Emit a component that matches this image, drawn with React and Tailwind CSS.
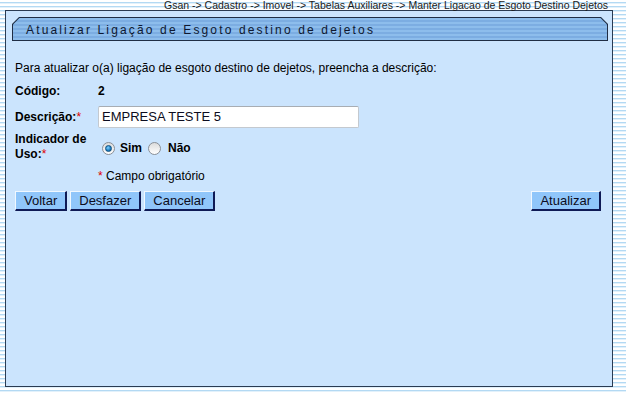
import React from "react";

function Radio({ checked }) {
  return (
    <span className="relative inline-flex h-[13px] w-[13px] items-center justify-center rounded-full border border-[#8a8f96] bg-[linear-gradient(to_bottom,#dcdcdc,#ffffff)]">
      {checked && (
        <span className="h-[7px] w-[7px] rounded-full border border-[#0d4f80] bg-[radial-gradient(circle_at_40%_35%,#7fd0ff,#1a7cc0_60%,#0b4d85)]" />
      )}
    </span>
  );
}

function Btn({ children }) {
  return (
    <button className="h-[20px] border-t border-l border-r-2 border-b-2 border-t-[#f0f8ff] border-l-[#f0f8ff] border-r-[#0f1a55] border-b-[#0f1a55] bg-[#90c6fa] px-[8px] text-[13px] leading-none text-[#0c0c20]">
      {children}
    </button>
  );
}

export default function App() {
  return (
    <div
      className="h-[393px] w-[626px] overflow-hidden bg-[repeating-linear-gradient(to_bottom,#ffffff_0px,#ffffff_2px,#b3d9f3_2px,#b3d9f3_3px,#e2f1fb_3px,#e2f1fb_4px)] text-[#000]"
      style={{ fontFamily: '"Liberation Sans", Arial, sans-serif' }}
    >
      <div className="relative z-10 flex h-[10px] justify-end pr-[18px]">
        <span className="relative top-[-1px] whitespace-nowrap text-[10.5px] leading-[12px] text-[#1a1a1a]">
          Gsan -&gt; Cadastro -&gt; Imovel -&gt; Tabelas Auxiliares -&gt; Manter Ligacao de Esgoto Destino Dejetos
        </span>
      </div>
      <div className="ml-[5px] h-[377px] w-[608px] border border-[#2a3b52] bg-[#cbe4fd]">
        <div className="ml-[6px] mt-[6px] h-[24px] w-[596px] bg-[#1f2d44] p-[1px] [clip-path:polygon(7px_0,calc(100%-7px)_0,100%_7px,100%_100%,0_100%,0_7px)]">
          <div className="flex h-full w-full items-center bg-[repeating-linear-gradient(to_bottom,#8dbdec_0px,#8dbdec_2px,#7cade2_2px,#7cade2_4px)] pl-[13px] pt-[1px] [clip-path:polygon(6.5px_0,calc(100%-6.5px)_0,100%_6.5px,100%_100%,0_100%,0_6.5px)]">
            <span className="text-[12px] leading-none tracking-[2.15px] text-[#0e1830]">
              Atualizar Ligação de Esgoto destino de dejetos
            </span>
          </div>
        </div>
        <div className="pl-[9px] pr-[11px]">
          <div className="mt-[20px] text-[12px] leading-[14px]">
            Para atualizar o(a) ligação de esgoto destino de dejetos, preencha a descrição:
          </div>
          <div className="mt-[9px] flex h-[14px] items-center text-[12px] font-bold leading-[14px]">
            <span className="w-[83px]">Código:</span>
            <span>2</span>
          </div>
          <div className="mt-[8px] flex h-[22px] items-center text-[12px] leading-[14px]">
            <span className="w-[83px] font-bold">
              Descrição:<span className="font-normal text-[#e00000]">*</span>
            </span>
            <div className="flex h-[22px] w-[261px] items-center rounded-[2px] border border-[#c4c9cf] border-t-[#a8adb3] bg-white pl-[3px] text-[13px] text-[#0c0c20]">
              EMPRESA TESTE 5
            </div>
          </div>
          <div className="mt-[4px] flex h-[30px] items-center text-[12px]">
            <span className="w-[83px] font-bold leading-[15px]">
              Indicador de
              <br />
              Uso:<span className="font-normal text-[#e00000]">*</span>
            </span>
            <div className="flex items-center pl-[4px] pt-[2px] font-bold">
              <Radio checked />
              <span className="ml-[5px]">Sim</span>
              <span className="ml-[6px] inline-flex">
                <Radio />
              </span>
              <span className="ml-[7px]">Não</span>
            </div>
          </div>
          <div className="mt-[7px] flex h-[14px] items-center text-[12px] leading-[14px]">
            <span className="w-[83px]" />
            <span>
              <span className="text-[#e00000]">*</span> Campo obrigatório
            </span>
          </div>
          <div className="mt-[8px] flex items-center justify-between">
            <div className="flex gap-[3px]">
              <Btn>Voltar</Btn>
              <Btn>Desfazer</Btn>
              <Btn>Cancelar</Btn>
            </div>
            <Btn>Atualizar</Btn>
          </div>
        </div>
      </div>
    </div>
  );
}
